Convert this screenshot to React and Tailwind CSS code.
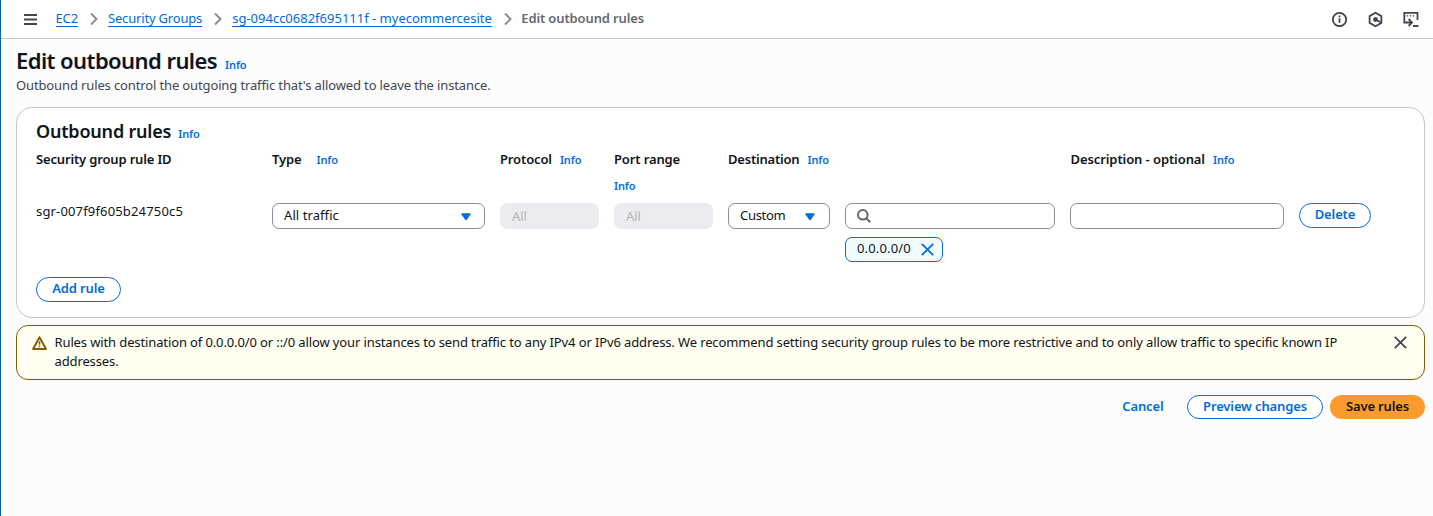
import React from "react";

const linkText = "font-semibold text-[#006ce0]";

function Info({ className = "" }) {
  return <a className={`text-[11px] ${linkText} ${className}`}>Info</a>;
}

function Chevron() {
  return (
    <svg className="h-[14px] w-[9px] shrink-0" viewBox="0 0 9 14" fill="none" stroke="#8c8c94" strokeWidth="2">
      <path d="M1 1.500l5.500 5.500L1 12.500" />
    </svg>
  );
}

function Crumb({ children, className = "" }) {
  return (
    <a className={`mt-[8px] h-[19px] whitespace-nowrap border-b border-[#006ce0] leading-[20px] text-[#006ce0] ${className}`}>
      {children}
    </a>
  );
}

function Caret() {
  return (
    <svg className="mt-[1px] h-[8px] w-[10px]" viewBox="0 0 10 8">
      <path d="M1 1h8L5 6.600z" fill="#006ce0" stroke="#006ce0" strokeWidth="1.4" strokeLinejoin="round" />
    </svg>
  );
}

function Close({ className }) {
  return (
    <svg className={`h-[13px] w-[13px] ${className}`} viewBox="0 0 13 13" fill="none" stroke="currentColor" strokeWidth="1.8">
      <path d="M.8.8l11.4 11.4M12.2.8L.8 12.2" />
    </svg>
  );
}

function Select({ children, className = "" }) {
  return (
    <div className={`flex h-[26px] items-center justify-between rounded-[7px] border border-[#8c8c94] bg-white pl-[11px] ${className}`}>
      <span className="pb-[2px]">{children}</span>
      <Caret />
    </div>
  );
}

function Disabled() {
  return <div className="h-[26px] rounded-[7px] bg-[#ebebf0] pl-[12px] leading-[26px] text-[#b4b4bb]">All</div>;
}

function Pill({ children, className = "" }) {
  return (
    <button
      className={`rounded-full border border-[#006ce0] bg-white text-center whitespace-nowrap ${linkText} ${className}`}
    >
      {children}
    </button>
  );
}

const columns = "grid grid-cols-[221px_213px_99px_99px_102px_210px_214px_72px] gap-x-[15px]";

export default function App() {
  return (
    <div className="h-[516px] w-[1433px] overflow-hidden border-l border-[#0063b8] bg-[#fcfcfd] font-['Noto_Sans',sans-serif] text-[13px] leading-[20px] tracking-[-0.13px] text-[#0f141a]">
      <header className="flex h-[39px] border-b border-[#c6c6cd] bg-white pr-[14px] pl-[23px]">
        <svg className="mt-[13px] mr-[18.5px] h-[13px] w-[13px]" viewBox="0 0 13 13" stroke="#424650" strokeWidth="2">
          <path d="M0 2h13M0 6.500h13M0 11h13" />
        </svg>
        <Crumb>EC2</Crumb>
        <div className="mt-[12px] ml-[12px] w-[18px]"><Chevron /></div>
        <Crumb className="tracking-[-0.18px]">Security Groups</Crumb>
        <div className="mt-[12px] ml-[12px] w-[18px]"><Chevron /></div>
        <Crumb className="tracking-[0px]">sg-094cc0682f695111f - myecommercesite</Crumb>
        <div className="mt-[12px] ml-[12px] w-[17.5px]"><Chevron /></div>
        <span className="mt-[8px] font-semibold text-[#656871]">Edit outbound rules</span>
        <div className="mt-[11px] ml-auto flex h-[16px] gap-[20px]">
          <svg className="h-[16px] w-[16px]" viewBox="0 0 16 16" fill="none" stroke="#424650">
            <circle cx="8.500" cy="8.500" r="6.700" strokeWidth="1.8" />
            <path d="M8.500 4.500v1.800M8.500 7.200v4.600" strokeWidth="1.8" />
          </svg>
          <svg className="h-[17px] w-[16px]" viewBox="0 0 16 17" fill="none" stroke="#424650" strokeWidth="1.8" strokeLinejoin="round">
            <path d="M8.500 1.700l5.900 3.400v6.800l-5.900 3.400-5.900-3.400V5.100z" />
            <circle cx="8.500" cy="8.500" r="1.5" fill="#424650" />
            <path d="M8.500 8.500l5.500 3" />
          </svg>
          <svg className="h-[17px] w-[16px]" viewBox="0 0 16 17" fill="none" stroke="#424650" strokeWidth="1.8">
            <path d="M14.500 9V1.900H1.300v9.600h7.300M5.600 8l3.400 3.500L5.600 15M10 15H15.400" />
            <path d="M3.600 4.800h1.500M6.600 4.800h1.500M9.600 4.800h1.500" strokeWidth="1.3" />
          </svg>
        </div>
      </header>

      <main className="pr-[8px] pl-[15px]">
        <div className="flex h-[36px] items-baseline pt-[9px]">
          <h1 className="text-[22px] leading-[24px] font-semibold tracking-[-0.57px]">Edit outbound rules</h1>
          <Info className="ml-[8px]" />
        </div>
        <p className="text-[#424650]">Outbound rules control the outgoing traffic that's allowed to leave the instance.</p>

        <section className="mt-[12px] h-[211px] rounded-[16px] border border-[#c6c6cd] bg-white px-[19px] pt-[11px]">
          <div className="flex h-[24px] items-baseline">
            <h2 className="text-[18px] leading-[24px] font-semibold tracking-[-0.2px]">Outbound rules</h2>
            <Info className="ml-[7px]" />
          </div>
          <div className={`mt-[6px] h-[54px] font-semibold ${columns}`}>
            <div className="tracking-[-0.16px]">Security group rule ID</div>
            <div>Type<Info className="ml-[15px]" /></div>
            <div>Protocol<Info className="ml-[8px]" /></div>
            <div className="flex flex-col gap-[7px]">Port range<Info /></div>
            <div className="col-span-2 tracking-[-0.2px]">Destination<Info className="ml-[8px] tracking-[-0.13px]" /></div>
            <div className="col-span-2 pl-[0.5px] tracking-[-0.09px]">Description - optional<Info className="ml-[8px]" /></div>
          </div>
          <div className={`h-[74px] items-start ${columns}`}>
            <div className="-mt-[2px] tracking-[0.16px]">sgr-007f9f605b24750c5</div>
            <Select className="pr-[13.5px] tracking-[0.08px]">All traffic</Select>
            <Disabled />
            <Disabled />
            <Select className="pr-[14.5px] tracking-[-0.3px]">Custom</Select>
            <div>
              <div className="flex h-[26px] items-center rounded-[7px] border border-[#8c8c94] bg-white pl-[11px]">
                <svg className="h-[14px] w-[14px]" viewBox="0 0 14 14" fill="none" stroke="#656871" strokeWidth="2">
                  <circle cx="5.800" cy="5.800" r="4.800" />
                  <path d="M9.300 9.300l4 4" />
                </svg>
              </div>
              <div className="mt-[8px] flex h-[25px] w-[98px] items-center justify-between rounded-[7px] border border-[#006ce0] bg-[#f0fbff] pr-[8px] pl-[11px]">
                <span className="pb-[3px] tracking-[0.16px]">0.0.0.0/0</span>
                <Close className="text-[#006ce0]" />
              </div>
            </div>
            <div className="h-[26px] rounded-[7px] border border-[#8c8c94] bg-white" />
            <Pill className="h-[25px] pb-[3px]">Delete</Pill>
          </div>
          <Pill className="h-[25px] w-[85px] pb-[3px]">Add rule</Pill>
        </section>

        <section className="mt-[7px] flex h-[55px] rounded-[12px] border border-[#855900] bg-[#fffef0] pt-[7px] pr-[17px] pl-[15px]">
          <svg className="mt-[3px] mr-[6.5px] h-[15px] w-[16px] shrink-0" viewBox="0 0 16 15" fill="none" stroke="#855900" strokeWidth="1.9" strokeLinejoin="round">
            <path d="M7.500 1.200L1.100 13h12.900z" />
            <path d="M7.500 5.200v3.600M7.500 9.800v1.500" strokeWidth="1.6" />
          </svg>
          <p className="w-[1300px] leading-[19px] tracking-[-0.12px]">
            Rules with destination of 0.0.0.0/0 or ::/0 allow your instances to send traffic to any IPv4 or IPv6 address. We recommend setting security group rules to be more restrictive and to only allow traffic to specific known IP addresses.
          </p>
          <Close className="mt-[3px] ml-auto text-[#424650]" />
        </section>

        <div className="mt-[15px] flex justify-end">
          <button className={`mr-[23.5px] h-[24px] pb-[2px] ${linkText}`}>Cancel</button>
          <Pill className="mr-[7px] h-[24px] w-[136px] pb-[2px]">Preview changes</Pill>
          <button className="h-[24px] w-[95px] rounded-full bg-[#fb9b2d] pb-[2px] font-semibold">Save rules</button>
        </div>
      </main>
    </div>
  );
}
